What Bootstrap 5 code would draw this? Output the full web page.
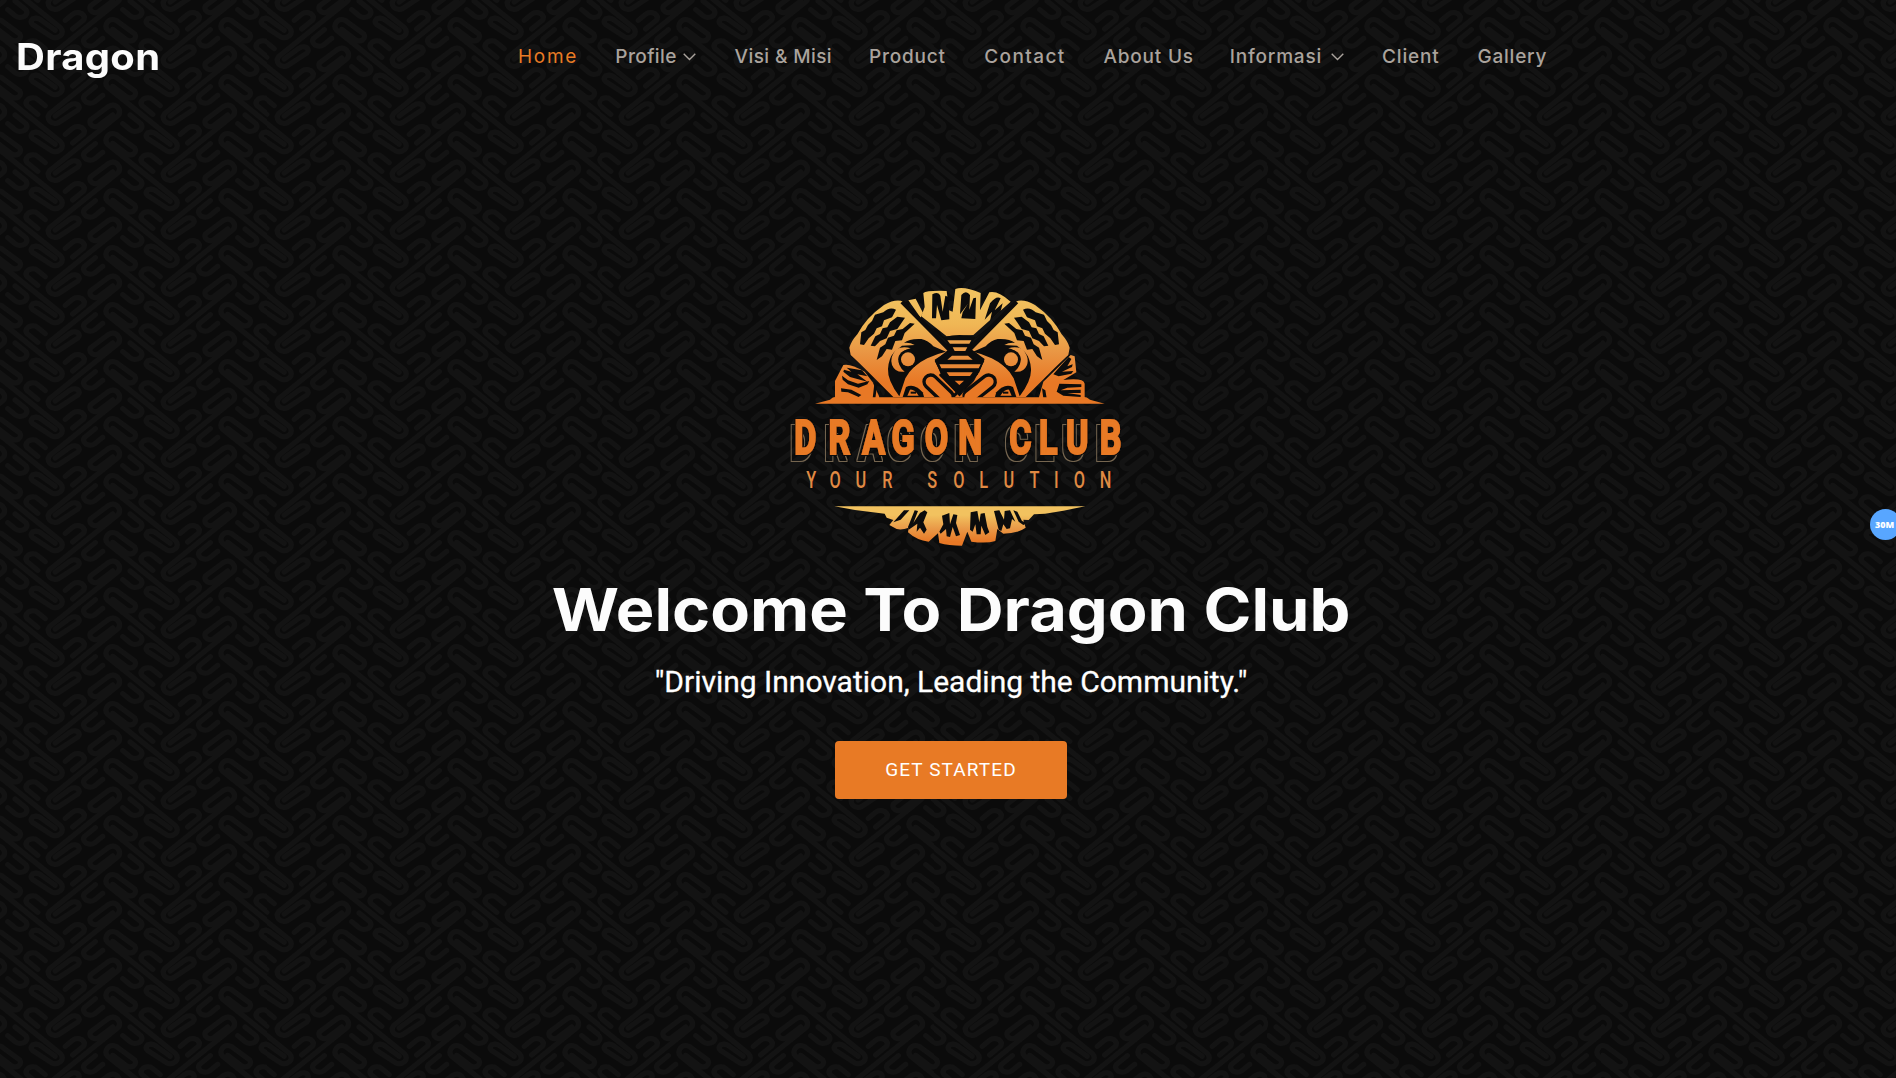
<!DOCTYPE html>
<html lang="id">
<head>
<meta charset="utf-8">
<meta name="viewport" content="width=device-width, initial-scale=1">
<title>Dragon Club</title>
<link href="https://cdn.jsdelivr.net/npm/bootstrap@5.3.0/dist/css/bootstrap.min.css" rel="stylesheet">
<style>
html,body{height:100%;overflow:hidden}
body{background-color:#0b0b0b;font-family:Roboto,sans-serif;
background-image:url("data:image/svg+xml,%3Csvg xmlns='http://www.w3.org/2000/svg' xmlns:xlink='http://www.w3.org/1999/xlink' width='114.667' height='57' viewBox='0 0 344 171'%3E%3Cdefs%3E%3Cg id='j' fill='none' stroke='%23131313' stroke-width='15' stroke-linejoin='round' stroke-linecap='round'%3E%3Cpath d='M38 40L80 72Q90 78 100 72Q110 64 104 54L50 14Q36 6 24 16Q12 30 22 42L226 206Q236 218 226 230Q214 240 200 234L142 196Q134 188 142 180Q154 174 166 182L210 214'/%3E%3Cpath d='M158 124L126 98Q118 88 130 78Q146 70 158 80L180 98M90 126L122 152Q130 162 118 172Q102 180 90 170L68 152'/%3E%3C/g%3E%3Cg id='c'%3E%3Cuse xlink:href='%23j'/%3E%3Cuse xlink:href='%23j' transform='translate(420 86) scale(-1 1)'/%3E%3C/g%3E%3Cg id='r'%3E%3Cuse xlink:href='%23c' y='-342'/%3E%3Cuse xlink:href='%23c' y='-171'/%3E%3Cuse xlink:href='%23c'/%3E%3Cuse xlink:href='%23c' y='171'/%3E%3C/g%3E%3C/defs%3E%3Cuse xlink:href='%23r'/%3E%3Cuse xlink:href='%23r' x='-344'/%3E%3C/svg%3E");
background-position:100px 700px}
.navbar{height:112px}
.site-name{font:700 37px/1 Inter,sans-serif;color:#fcfcfc;letter-spacing:.3px;transform:scaleX(1.08);transform-origin:0 50%;width:502px}
.menu{gap:38.3px;font:500 19px/24px Inter,sans-serif}
.menu .nav-link{color:#aaa39d;padding:1px 0 0;white-space:nowrap;display:flex;align-items:center;justify-content:space-between;letter-spacing:.8px}
.menu .nav-link.active{color:#e87b25;font-weight:400;letter-spacing:1.7px}
.menu .nav-link.snug{letter-spacing:.4px}
.menu .nav-link.airy{letter-spacing:1.4px}
.menu svg{width:13px;height:8px}
.hero-logo{width:360px;height:275px;margin-left:17px}
.headline{font:700 59px/72px Inter,sans-serif;color:#fcfcfc;white-space:nowrap;transform:scaleX(1.1);margin-top:24px}
.tagline{font-size:30px;line-height:36px;color:#fff;white-space:nowrap;margin-top:18px;-webkit-text-stroke:.3px #fff}
.btn-start{width:232px;height:58px;background:#e87a25;color:#fff;border-radius:4px;font-size:19px;font-weight:400;letter-spacing:1.1px;margin-top:41px}
.size-chip{width:31px;height:31px;right:-5px;top:509px;background:#58a6ff;color:#fff;font:800 9px/31px "Open Sans",sans-serif;padding-left:5px}
.hero{padding-top:163px;padding-left:6px}
</style>
</head>
<body>
<header class="navbar p-0 ps-3 justify-content-start flex-nowrap">
<a class="site-name text-decoration-none" href="#">Dragon</a>
<nav class="menu nav flex-nowrap">
<a class="nav-link active" style="width:59px" href="#">Home</a>
<a class="nav-link snug" style="width:81px" href="#">Profile<svg viewBox="0 0 13 8" fill="none" stroke="currentColor" stroke-width="1.4"><path d="M.7 .8L6.5 6.6L12.3 .8"/></svg></a>
<a class="nav-link snug" style="width:96px" href="#">Visi &amp; Misi</a>
<a class="nav-link" style="width:77px" href="#">Product</a>
<a class="nav-link airy" style="width:81px" href="#">Contact</a>
<a class="nav-link" style="width:88px" href="#">About Us</a>
<a class="nav-link" style="width:114px" href="#">Informasi<svg viewBox="0 0 13 8" fill="none" stroke="currentColor" stroke-width="1.4"><path d="M.7 .8L6.5 6.6L12.3 .8"/></svg></a>
<a class="nav-link" style="width:57px" href="#">Client</a>
<a class="nav-link" style="width:71px" href="#">Gallery</a>
</nav>
</header>
<main class="hero d-flex flex-column align-items-center">
<svg class="hero-logo" viewBox="0 0 1080 825">
<defs>
<linearGradient id="gold" gradientUnits="userSpaceOnUse" x1="0" y1="60" x2="0" y2="350"><stop offset="0" stop-color="#f2c25f"/><stop offset=".3" stop-color="#f0b755"/><stop offset=".6" stop-color="#e99543"/><stop offset=".9" stop-color="#e87825"/></linearGradient>
<linearGradient id="gold2" gradientUnits="userSpaceOnUse" x1="0" y1="700" x2="0" y2="800"><stop offset=".2" stop-color="#f2c25f"/><stop offset=".6" stop-color="#e99a48"/><stop offset="1" stop-color="#e87825"/></linearGradient>
<filter id="relief" x="-5%" y="-20%" width="110%" height="150%">
<feMorphology in="SourceAlpha" operator="dilate" radius="3" result="fat"/>
<feComposite in="fat" in2="SourceAlpha" operator="out" result="ring"/>
<feFlood flood-color="#75654f"/><feComposite in2="ring" operator="in" result="line"/>
<feOffset in="line" dx="-13" dy="17" result="far"/>
<feMorphology in="SourceAlpha" operator="dilate" radius="4" result="halo"/>
<feFlood flood-color="#0c0c0c"/><feComposite in2="halo" operator="in" result="darkhalo"/>
<feMerge><feMergeNode in="far"/><feMergeNode in="darkhalo"/><feMergeNode in="SourceGraphic"/></feMerge>
</filter>
<g id="head">
<path fill="url(#gold)" d="M208 218Q214 198 232 178Q258 128 312 90Q348 70 370 80L504 225L464 258L495 318L540 366H340L268 294Q236 262 212 240Z"/>
<g fill="#0c0c0c">
<path d="M348 104Q328 94 310 112L285 119L276 138L264 150L256 165L244 172L240 208L252 210L266 190L282 176L290 160L306 154L312 136L336 127Z"/>
<path d="M375 128L352 125L330 142L322 157L308 160L300 177L286 184L272 212L285 214L300 198L320 190L330 168L352 162Z"/>
<path d="M404 146L390 144L368 162L350 166L342 182L324 188L316 208L300 218L290 255L306 244L320 222L336 224L346 198L366 196L374 174Z"/>
<path d="M372 204Q388 190 424 192Q444 196 460 214L498 230Q470 236 442 250Q396 272 376 310L358 364Q322 316 324 282Q326 250 342 232L366 212L404 210Q390 202 372 204Z"/>
<path d="M366 372L378 336Q404 324 428 352L434 372Z"/>
</g>
<path d="M350 222Q328 246 336 270Q346 294 374 290Q352 272 356 248Q364 226 392 220Q370 212 350 222Z" fill="url(#gold)"/>
<circle cx="384" cy="253" r="29" fill="#0c0c0c"/>
<circle cx="384" cy="253" r="21" fill="url(#gold)"/>
<path d="M382 362L390 344Q403 342 416 362Z" fill="#e87825"/><path d="M392 353h16" stroke="#0c0c0c" stroke-width="6"/>
</g>
</defs>
<path fill="url(#gold)" d="M385 76L407 71L428 112L422 128ZM430 54Q440 46 500 48L507 106L518 110L526 42Q550 32 602 54L600 106L628 52Q654 46 692 80L580 180L500 184L424 124L434 96Z"/>
<path fill="#0c0c0c" d="M457 58Q476 48 481 62L488 110L496 62L506 66L508 133L484 136L471 90L468 130L456 130ZM544 60Q558 44 570 60L568 104L580 70L588 68L586 132L544 130L548 112L564 86L540 118ZM630 85Q650 60 662 70L644 106L668 85L662 108L630 138L636 110L614 134Z"/>
<path fill="url(#gold)" d="M190 270Q210 264 254 290L278 322L300 370H165V318Z"/>
<g fill="#0c0c0c"><path d="M200 278L246 286L262 304L232 298L262 320L210 306L190 290L192 284L214 290ZM186 302L204 316L234 326L268 318L262 328L236 338L204 328L188 314ZM183 340L214 344L244 360L236 366L204 352L184 350ZM284 318L292 326L286 370L278 370ZM300 346L314 370H298Z"/></g>
<path fill="url(#gold)" d="M872 240L884 244L889 292L850 315Q912 308 914 326V370H776L790 320Z"/>
<g fill="#0c0c0c"><path d="M866 246L874 252L862 274L878 268L876 276L846 290L880 288L874 296L836 304L820 298L842 272ZM838 326L904 328V336L862 338L842 346L902 344V354L862 354L902 360V366L850 362L830 350ZM786 340L796 346L800 370H790ZM770 344L776 370H762Z"/></g>
<use href="#head"/><use href="#head" transform="translate(1077) scale(-1 1)"/>
<path fill="#0c0c0c" d="M494 186Q538 174 586 186L570 220L614 252L598 292L538 358L482 296L464 254L508 226Z"/>
<path fill="none" stroke="#0c0c0c" stroke-width="13" d="M366 80L510 226M710 80L570 222"/>
<g fill="url(#gold)"><path d="M502 196H574L568 206H510ZM518 217H562L556 228H524ZM516 242H564L578 254H502ZM478 268H602L596 280H484ZM500 292H578L570 303H508ZM524 317H552L538 330Z"/></g>
<g fill="none" stroke-linecap="round"><path stroke="#0c0c0c" stroke-width="50" d="M452 320L500 366M626 320L572 362"/><path stroke="#e87825" stroke-width="30" d="M452 320L500 366M626 320L568 366"/><path stroke="#0c0c0c" stroke-width="9" d="M482 300L536 352M520 364L590 296"/></g>
<path fill="#e87825" d="M105 386L150 374Q160 362 180 367H898Q918 362 930 374L974 386Z"/>
<g font-family="Roboto,sans-serif" font-weight="700">
<g filter="url(#relief)"><g fill="#e87a25" stroke="#e87a25" stroke-width="6" font-size="146" transform="scale(.7 1)"><text y="537" x="61 208 352 478 620 764 983 1110 1226 1370">DRAGONCLUB</text></g></g>
<g fill="#e08a43" font-weight="500" font-size="70" transform="scale(.7 1)"><text y="640" x="113 212 324 438 631 743 854 958 1069 1174 1259 1370">YOURSOLUTION</text></g>
</g>
<path fill="url(#gold2)" d="M163 694H916L850 707L795 716L762 718L746 735L730 734L737 758Q712 776 670 776L652 762L646 798Q620 806 574 800L562 770L546 812Q506 812 478 804L474 775L446 800Q410 796 384 772L386 758Q366 766 350 762L328 750L340 735L320 728L314 716L225 705Z"/>
<g fill="#0c0c0c"><path d="M372 706H388L362 734L340 742ZM404 706L414 708L400 744L420 714L434 706L442 712L430 742L440 764L432 776L420 758L410 770L412 746L386 764L384 756ZM486 722L508 714L510 748L520 718L532 720L528 744L540 780L528 784L518 756L510 786L500 784L498 762L482 776L478 770L490 748ZM572 712L592 708L598 742L602 716L614 714L622 756L628 772L616 780L604 752L602 778L590 778L586 748L578 770L570 764ZM642 708L658 706L672 734L674 708L690 706L706 740L696 732L690 760L680 762L670 748L664 768L656 764ZM700 706L712 710L726 738L742 744L730 750L716 740Z"/></g>
</svg>
<h1 class="headline mb-0">Welcome To Dragon Club</h1>
<p class="tagline mb-0">"Driving Innovation, Leading the Community."</p>
<a class="btn btn-start d-flex align-items-center justify-content-center" href="#">GET STARTED</a>
</main>
<div class="size-chip position-fixed rounded-circle">30M</div>
<script src="https://cdn.jsdelivr.net/npm/bootstrap@5.3.0/dist/js/bootstrap.bundle.min.js"></script>
</body>
</html>
